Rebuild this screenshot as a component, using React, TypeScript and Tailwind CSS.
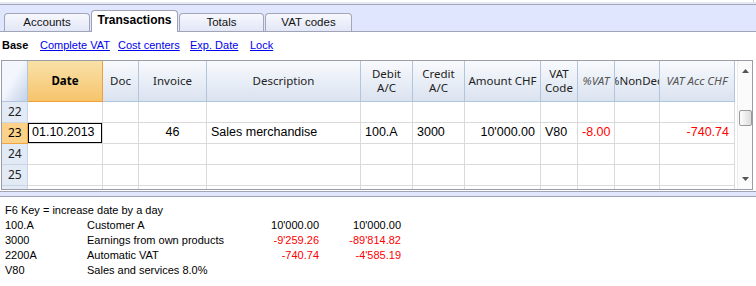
import type { ReactNode } from "react";

const gridCols = "grid grid-cols-[26px_75px_36px_68px_154px_52px_52px_76px_37px_37px_45px_75px]";

const Tab = ({ label, active, className }: { label: string; active?: boolean; className: string }) => (
  <div
    className={
      active
        ? `${className} h-[22px] -mb-px relative z-10 flex items-center justify-center pb-[3px] bg-white border border-b-0 border-[#9ea2b4] rounded-t-[4px] font-bold text-[12px]`
        : `${className} h-[18px] flex items-center justify-center bg-linear-to-b from-[#f7f8fd] to-[#e2e7f7] border border-b-0 border-[#a2a6b8] rounded-t-[4px] text-[#111]`
    }
  >
    {label}
  </div>
);

const Head = ({ children, italic }: { children: ReactNode; italic?: boolean }) => (
  <div
    className={`flex items-center justify-center text-center overflow-hidden whitespace-nowrap leading-[14px] border-r border-b border-[#b3c5dc] bg-linear-to-b from-[#f8fafd] to-[#dae3f0] font-['Noto_Sans',sans-serif] text-[11.5px] ${
      italic ? "italic text-[#555]" : "text-[#222]"
    }`}
  >
    <div>{children}</div>
  </div>
);

const Cell = ({ children, align = "left", red, editing }: { children?: ReactNode; align?: "left" | "center" | "right"; red?: boolean; editing?: boolean }) => (
  <div
    className={`h-[21px] flex items-center pb-[2px] overflow-hidden whitespace-nowrap text-[12.5px] border-r border-b border-[#dadada] ${
      align === "right" ? "justify-end pr-[5px]" : align === "center" ? "justify-center" : "pl-[4px]"
    } ${red ? "text-[#ff0000]" : "text-black"} ${editing ? "shadow-[inset_0_0_0_1px_#000] pl-[3px]" : ""}`}
  >
    {children}
  </div>
);

const RowNum = ({ n, active }: { n: string; active?: boolean }) => (
  <div
    className={`h-[21px] flex items-center pl-[6px] pb-[1px] text-[12px] font-['Noto_Sans',sans-serif] border-r border-b ${
      active ? "bg-[#fcd18a] border-[#f0a444] text-black" : "bg-[#e2eaf6] border-[#c9d5e5] text-[#222]"
    }`}
  >
    {n}
  </div>
);

const EmptyRow = ({ n }: { n: string }) => (
  <div className={gridCols}>
    <RowNum n={n} />
    {Array.from({ length: 11 }, (_, i) => (
      <Cell key={i} />
    ))}
  </div>
);

const info = [
  { code: "100.A", desc: "Customer A", a: "10'000.00", b: "10'000.00", red: false },
  { code: "3000", desc: "Earnings from own products", a: "-9'259.26", b: "-89'814.82", red: true },
  { code: "2200A", desc: "Automatic VAT", a: "-740.74", b: "-4'585.19", red: true },
  { code: "V80", desc: "Sales and services 8.0%", a: "", b: "", red: false },
];

export default function App() {
  return (
    <div className="w-[756px] h-[286px] overflow-hidden bg-white font-['Liberation_Sans',Arial,sans-serif] text-black">
      {/* bit of the window above */}
      <div className="h-[2px] w-[754px] bg-white border-r border-[#c8cad6]" />
      <div className="h-[2px] bg-[#e6e8f4]" />

      {/* tabs */}
      <div className="h-[28px] border-y border-[#a0a4b6] bg-[#dfe6fe] flex items-end pl-[4px] gap-[1px] text-[11.5px]">
        <Tab label="Accounts" className="w-[86px]" />
        <Tab label="Transactions" active className="w-[87px]" />
        <Tab label="Totals" className="w-[85px]" />
        <Tab label="VAT codes" className="w-[87px]" />
      </div>

      {/* views */}
      <div className="h-[28px] flex items-center text-[11px] pb-[1px]">
        <span className="w-[40px] pl-[2px] font-bold">Base</span>
        <span className="w-[78px] text-[#0000ee] underline">Complete VAT</span>
        <span className="w-[72px] text-[#0000ee] underline">Cost centers</span>
        <span className="w-[60px] text-[#0000ee] underline">Exp. Date</span>
        <span className="text-[#0000ee] underline">Lock</span>
      </div>

      {/* table */}
      <div className="ml-[1px] w-[752px] h-[130px] border border-[#9a9ca8] flex">
        <div className="w-[733px] overflow-hidden">
          <div className={`${gridCols} h-[41px]`}>
            <div className="border-r border-b border-[#b3c5dc] bg-linear-to-br from-[#f3f6fc] from-45% to-[#c3d1e9]" />
            <div className="flex items-center justify-center font-bold text-[11.5px] font-['Noto_Sans',sans-serif] border-r border-b border-[#f0a03a] bg-linear-to-b from-[#f9e1a8] to-[#f6c46a]">
              Date
            </div>
            <Head>Doc</Head>
            <Head>Invoice</Head>
            <Head>Description</Head>
            <Head>Debit<br />A/C</Head>
            <Head>Credit<br />A/C</Head>
            <Head>Amount CHF</Head>
            <Head>VAT<br />Code</Head>
            <Head italic>%VAT</Head>
            <Head>%NonDed</Head>
            <Head italic>VAT Acc CHF</Head>
          </div>

          <EmptyRow n="22" />
          <div className={gridCols}>
            <RowNum n="23" active />
            <Cell editing>01.10.2013</Cell>
            <Cell />
            <Cell align="center">46</Cell>
            <Cell>Sales merchandise</Cell>
            <Cell>100.A</Cell>
            <Cell>3000</Cell>
            <Cell align="right">10'000.00</Cell>
            <Cell>V80</Cell>
            <Cell red>-8.00</Cell>
            <Cell />
            <Cell align="right" red>-740.74</Cell>
          </div>
          <EmptyRow n="24" />
          <EmptyRow n="25" />
          <div className={`${gridCols} h-[3px]`}>
            <div className="bg-[#e2eaf6] border-r border-[#c9d5e5]" />
            {Array.from({ length: 11 }, (_, i) => (
              <div key={i} className="border-r border-[#dadada]" />
            ))}
          </div>
        </div>

        {/* scrollbar */}
        <div className="w-[17px] pl-[2px] flex">
          <div className="flex-1 bg-[#fbfbfb] border-l border-[#ececec] flex flex-col items-center">
            <svg width="7" height="4" viewBox="0 0 7 4" className="mt-[8px]">
              <polygon points="3.5,0 7,4 0,4" fill="#555" />
            </svg>
            <div className="mt-[37px] w-[13px] h-[16px] rounded-[2px] border border-[#9a9a9a] bg-linear-to-r from-[#fdfdfd] to-[#dcdcdc]" />
            <div className="flex-1" />
            <svg width="7" height="4" viewBox="0 0 7 4" className="mb-[8px]">
              <polygon points="0,0 7,0 3.5,4" fill="#555" />
            </svg>
          </div>
        </div>
      </div>

      <div className="mt-[1px] h-[6px] border-y border-[#a0a4b6] bg-[#dfe6fe]" />

      {/* info panel */}
      <div className="pt-[6px] pl-[5px] text-[11px] leading-[15px]">
        <div>F6 Key = increase date by a day</div>
        {info.map((r) => (
          <div key={r.code} className="flex">
            <span className="w-[82px]">{r.code}</span>
            <span className="w-[152px]">{r.desc}</span>
            <span className={`w-[80px] text-right ${r.red ? "text-[#ff0000]" : ""}`}>{r.a}</span>
            <span className={`w-[82px] text-right ${r.red ? "text-[#ff0000]" : ""}`}>{r.b}</span>
          </div>
        ))}
      </div>
    </div>
  );
}
